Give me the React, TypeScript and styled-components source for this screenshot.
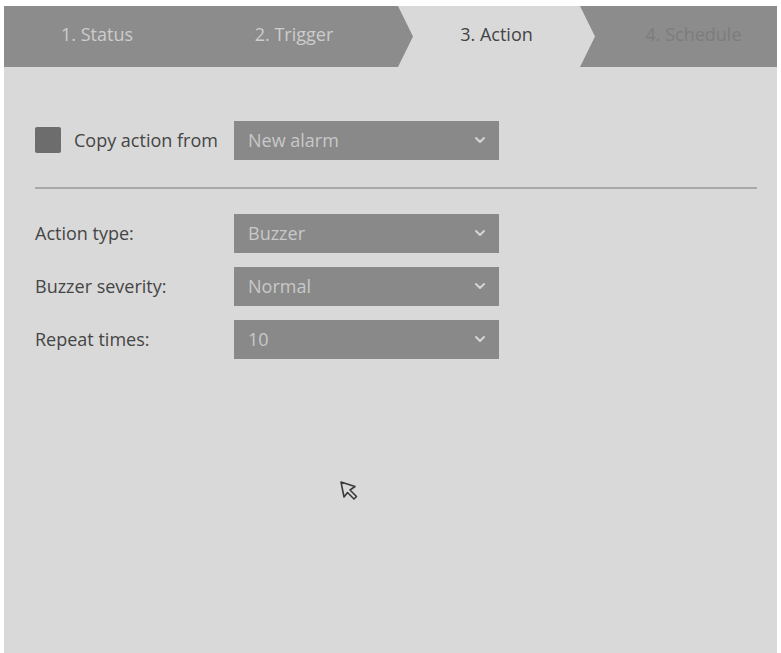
import styled, { createGlobalStyle } from "styled-components";
import { ChevronDown } from "lucide-react";

const GlobalStyle = createGlobalStyle`
  html, body {
    margin: 0;
    padding: 0;
    background: #ffffff;
  }
  body {
    font-family: "Open Sans", "Noto Sans", sans-serif;
  }
`;

const Panel = styled.div`
  margin: 6px 4px 0 4px;
  width: 773px;
  height: 647px;
  background: #d9d9d9;
  overflow: hidden;
`;

const Steps = styled.div`
  display: flex;
  height: 61px;
  background: #8c8c8c;
`;

const Step = styled.div<{ $width: number; $inset: number; $overlap: number; $active?: boolean; $muted?: boolean }>`
  flex: none;
  width: ${(p) => p.$width}px;
  margin-left: ${(p) => -p.$overlap}px;
  padding: 0 ${(p) => (p.$active ? 15 : 0)}px 6px ${(p) => p.$inset}px;
  box-sizing: border-box;
  display: flex;
  align-items: center;
  justify-content: center;
  font-size: 18px;
  color: ${(p) => (p.$active ? "#444444" : p.$muted ? "#7c7c7c" : "#cdcdcd")};
  position: relative;
  z-index: ${(p) => (p.$active ? 2 : 1)};
  ${(p) =>
    p.$active &&
    `
    background: #d9d9d9;
    clip-path: polygon(0 0, calc(100% - 15px) 0, 100% 50%, calc(100% - 15px) 100%, 0 100%, 15px 50%);
  `}
`;

const Content = styled.div`
  padding: 53px 20px 0 31px;
`;

const Row = styled.div`
  display: grid;
  grid-template-columns: 199px 265px;
  align-items: center;
  height: 40px;
  & + & {
    margin-top: 13px;
  }
`;

const CopyLabel = styled.label`
  display: flex;
  align-items: center;
  gap: 13px;
  font-size: 18px;
  color: #454545;
`;

const Box = styled.span`
  width: 26px;
  height: 26px;
  border-radius: 2px;
  background: #6d6d6d;
`;

const Label = styled.div`
  font-size: 18px;
  color: #454545;
`;

const Select = styled.div`
  height: 39px;
  background: #898989;
  display: flex;
  align-items: center;
  justify-content: space-between;
  padding: 0 11px 0 14px;
  font-size: 18px;
  color: #c8c8c8;
`;

const Divider = styled.hr`
  margin: 27px 0 24px 0;
  border: none;
  height: 2px;
  background: #a9a9a9;
`;

const Pointer = styled.svg`
  display: block;
  margin: 121px 0 0 304px;
`;

const steps = [
  { label: "1. Status", width: 186, inset: 0, overlap: 0 },
  { label: "2. Trigger", width: 208, inset: 0, overlap: 0 },
  { label: "3. Action", width: 197, inset: 15, overlap: 0 },
  { label: "4. Schedule", width: 197, inset: 30, overlap: 15 },
];

const fields = [
  { label: "Action type:", value: "Buzzer" },
  { label: "Buzzer severity:", value: "Normal" },
  { label: "Repeat times:", value: "10" },
];

function Dropdown({ value }: { value: string }) {
  return (
    <Select>
      <span>{value}</span>
      <ChevronDown size={16} strokeWidth={3} color="#d4d4d4" />
    </Select>
  );
}

export default function App() {
  return (
    <>
      <GlobalStyle />
      <Panel>
        <Steps>
          {steps.map((s, i) => (
            <Step
              key={s.label}
              $width={s.width}
              $inset={s.inset}
              $overlap={s.overlap}
              $active={i === 2}
              $muted={i === 3}
            >
              {s.label}
            </Step>
          ))}
        </Steps>
        <Content>
          <Row>
            <CopyLabel>
              <Box />
              Copy action from
            </CopyLabel>
            <Dropdown value="New alarm" />
          </Row>
          <Divider />
          {fields.map((f) => (
            <Row key={f.label}>
              <Label>{f.label}</Label>
              <Dropdown value={f.value} />
            </Row>
          ))}
          <Pointer width="22" height="22" viewBox="0 0 22 22">
            <path
              d="M2 2 L5 17 L8.5 12.5 L15 19 L17.5 16.5 L11 10 L16 6.5 Z"
              fill="none"
              stroke="#3a3a3a"
              strokeWidth="1.6"
              strokeLinejoin="round"
            />
          </Pointer>
        </Content>
      </Panel>
    </>
  );
}
